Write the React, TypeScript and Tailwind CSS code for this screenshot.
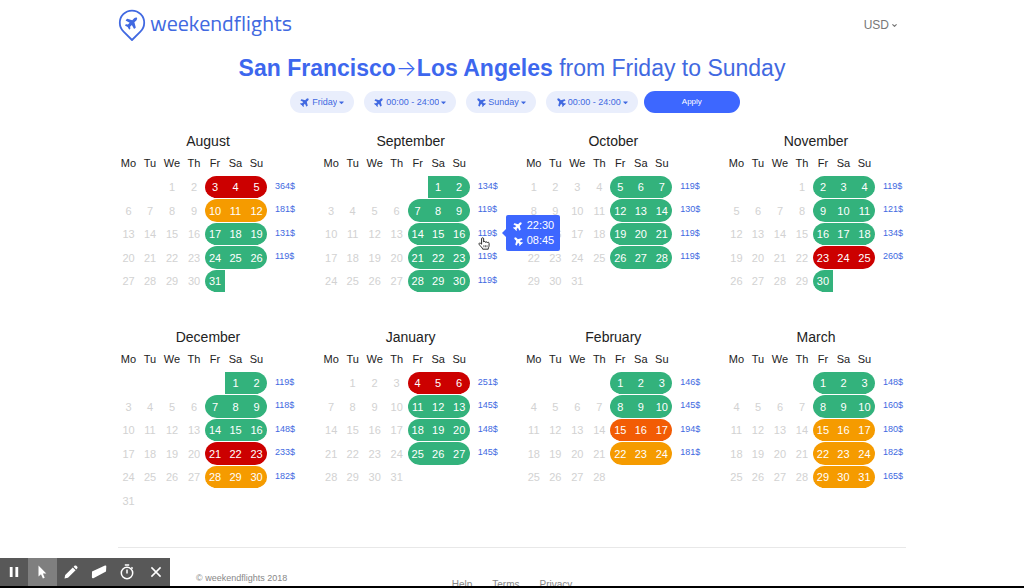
import React from "react";
import { FaPlane, FaCaretDown } from "react-icons/fa";
import { ChevronDown } from "lucide-react";

type Level = "green" | "amber" | "orange" | "red";

interface Weekend {
  price?: string;
  level: Level;
  flights?: { out: string; back: string };
}

interface Month {
  name: string;
  offset: number; // empty cells before the 1st
  days: number;
  weekends: (Weekend | null)[]; // one entry per calendar row
}

const WEEKDAYS = ["Mo", "Tu", "We", "Th", "Fr", "Sa", "Su"];

const COL_WIDTHS = ["w-[21px]", "w-[22px]", "w-[22px]", "w-[22px]", "w-5", "w-[21px]", "w-[21px]"];

const LEVEL_BG: Record<Level, string> = {
  green: "bg-[#33b27c]",
  amber: "bg-[#f59b00]",
  orange: "bg-[#f25c05]",
  red: "bg-[#cc0000]",
};

const MONTHS: Month[] = [
  {
    name: "August",
    offset: 2,
    days: 31,
    weekends: [
      { price: "364$", level: "red" },
      { price: "181$", level: "amber" },
      { price: "131$", level: "green" },
      { price: "119$", level: "green" },
      { level: "green" },
    ],
  },
  {
    name: "September",
    offset: 5,
    days: 30,
    weekends: [
      { price: "134$", level: "green" },
      { price: "119$", level: "green" },
      { price: "119$", level: "green", flights: { out: "22:30", back: "08:45" } },
      { price: "119$", level: "green" },
      { price: "119$", level: "green" },
    ],
  },
  {
    name: "October",
    offset: 0,
    days: 31,
    weekends: [
      { price: "119$", level: "green" },
      { price: "130$", level: "green" },
      { price: "119$", level: "green" },
      { price: "119$", level: "green" },
      null,
    ],
  },
  {
    name: "November",
    offset: 3,
    days: 30,
    weekends: [
      { price: "119$", level: "green" },
      { price: "121$", level: "green" },
      { price: "134$", level: "green" },
      { price: "260$", level: "red" },
      { level: "green" },
    ],
  },
  {
    name: "December",
    offset: 5,
    days: 31,
    weekends: [
      { price: "119$", level: "green" },
      { price: "118$", level: "green" },
      { price: "148$", level: "green" },
      { price: "233$", level: "red" },
      { price: "182$", level: "amber" },
      null,
    ],
  },
  {
    name: "January",
    offset: 1,
    days: 31,
    weekends: [
      { price: "251$", level: "red" },
      { price: "145$", level: "green" },
      { price: "148$", level: "green" },
      { price: "145$", level: "green" },
      null,
    ],
  },
  {
    name: "February",
    offset: 4,
    days: 28,
    weekends: [
      { price: "146$", level: "green" },
      { price: "145$", level: "green" },
      { price: "194$", level: "orange" },
      { price: "181$", level: "amber" },
      null,
    ],
  },
  {
    name: "March",
    offset: 4,
    days: 31,
    weekends: [
      { price: "148$", level: "green" },
      { price: "160$", level: "green" },
      { price: "180$", level: "amber" },
      { price: "182$", level: "amber" },
      { price: "165$", level: "amber" },
    ],
  },
];

function PlaneOut() {
  return <FaPlane className="size-2.5 shrink-0 -rotate-45" />;
}

function PlaneBack() {
  return <FaPlane className="size-2.5 shrink-0 -scale-x-100 rotate-45" />;
}

function Logo() {
  return (
    <a href="#" className="flex items-center gap-1 text-[#4169e1]">
      <svg viewBox="0 0 28 33" className="h-[33px] w-7" fill="none">
        <path
          d="M14 31 L5.6 22.6 A12.2 12.2 0 1 1 22.4 22.6 Z"
          stroke="currentColor"
          strokeWidth="1.8"
          strokeLinejoin="round"
        />
        <g transform="translate(14 13.6) rotate(-45) scale(0.024) translate(-288 -256)">
          <path
            fill="currentColor"
            d="M480 192H365.71L260.61 8.06A16.014 16.014 0 0 0 246.71 0h-65.5c-10.63 0-18.3 10.17-15.38 20.39L214.86 192H112l-43.2-57.6c-3.02-4.03-7.77-6.4-12.8-6.4H16.01C5.6 128-2.04 137.78.49 147.88L32 256 .49 364.12C-2.04 374.22 5.6 384 16.01 384H56c5.04 0 9.78-2.37 12.8-6.4L112 320h102.86l-49.03 171.6c-2.92 10.22 4.75 20.4 15.38 20.4h65.5c5.74 0 11.04-3.08 13.89-8.06L365.71 320H480c35.35 0 96-28.65 96-64s-60.65-64-96-64z"
          />
        </g>
      </svg>
      <span className="pb-1 font-['Titillium_Web','Noto_Sans',sans-serif] text-[22px] leading-8">weekendflights</span>
    </a>
  );
}

interface FilterProps {
  label: string;
  icon: React.ReactNode;
  options: string[];
}

function Filter({ label, icon, options }: FilterProps) {
  return (
    <label className="flex h-[22px] items-center rounded-full bg-[#e9eefc] px-2.5 text-[#4169e1]">
      {icon}
      <select
        aria-label={label}
        className="field-sizing-content ml-0.5 cursor-pointer appearance-none bg-transparent text-[9px] leading-3 outline-none"
      >
        {options.map((o) => (
          <option key={o}>{o}</option>
        ))}
      </select>
      <FaCaretDown className="ml-0.5 h-[9px] w-[5px] shrink-0" />
    </label>
  );
}

function FlightTooltip({ out, back }: { out: string; back: string }) {
  return (
    <div
      role="tooltip"
      className="absolute -top-2 left-9 z-10 flex h-9 w-[54px] flex-col justify-center rounded-xs bg-[#3d67ff] pl-[7px] text-[11px] leading-[15px] text-white"
    >
      <span className="absolute top-1/2 -left-1 -translate-y-1/2 border-y-4 border-r-4 border-y-transparent border-r-[#3d67ff]" />
      <span className="flex items-center gap-1">
        <PlaneOut />
        {out}
      </span>
      <span className="flex items-center gap-1">
        <PlaneBack />
        {back}
      </span>
    </div>
  );
}

function HandCursor() {
  return (
    <svg viewBox="0 0 17 19" className="absolute top-3.5 left-2 z-10 h-[13px] w-3">
      <path
        d="M5 10.5 V2.6 a1.5 1.5 0 0 1 3 0 V7.4 a1.4 1.4 0 0 1 2.7 .4 a1.4 1.4 0 0 1 2.6 .7 a1.4 1.4 0 0 1 2.6 1 V13 c0 1.6-1.2 2.4-1.2 4.8 H6.6 C6.4 15.6 3 13.6 1.3 10.6 C.6 9.2 2.3 8.2 3.4 9.2 Z"
        fill="#fff"
        stroke="#222"
        strokeWidth="1.4"
        strokeLinejoin="round"
      />
      <path d="M8.3 12 v3 M10.6 12 v3 M12.9 12 v3" stroke="#222" strokeWidth="1" />
    </svg>
  );
}

function dayCellStyle(day: number, month: Month, col: number, weekend: Weekend | null): string {
  if (day < 1 || day > month.days) return "";
  if (col < 4 || !weekend) return "text-[#d2d2d2]";
  const round = col === 4 ? "rounded-l-full" : col === 6 ? "rounded-r-full" : "";
  return `${LEVEL_BG[weekend.level]} ${round} bg-clip-padding text-white`;
}

function MonthTable({ month }: { month: Month }) {
  return (
    <table className="w-[180px] table-fixed border-separate border-spacing-0 text-center text-[11px]">
      <caption className="h-5 text-sm leading-5 text-[#222]">{month.name}</caption>
      <thead>
        <tr className="h-[25px]">
          {WEEKDAYS.map((d, i) => (
            <th key={d} scope="col" className={`p-0 font-normal text-[#222] ${COL_WIDTHS[i]}`}>
              {d}
            </th>
          ))}
          <td />
        </tr>
      </thead>
      <tbody>
        {month.weekends.map((weekend, week) => (
          <tr key={week} className="odd:h-[23px] even:h-6">
            {WEEKDAYS.map((d, col) => {
              const day = week * 7 + col - month.offset + 1;
              return (
                <td
                  key={d}
                  className={`border-b border-white p-0 leading-[22px] ${dayCellStyle(day, month, col, weekend)}`}
                >
                  {day > 0 && day <= month.days ? day : ""}
                </td>
              );
            })}
            <td className="relative p-0 pl-2 text-left align-top text-[9px] leading-5 text-[#4169e1]">
              {weekend?.price}
              {weekend?.flights && (
                <>
                  <HandCursor />
                  <FlightTooltip {...weekend.flights} />
                </>
              )}
            </td>
          </tr>
        ))}
      </tbody>
    </table>
  );
}

const TOOLS = [
  { key: "pause", label: "Pause" },
  { key: "pointer", label: "Pointer" },
  { key: "pen", label: "Pen" },
  { key: "eraser", label: "Eraser" },
  { key: "timer", label: "Timer" },
  { key: "close", label: "Close" },
];

function ToolIcon({ name }: { name: string }) {
  return (
    <svg viewBox="0 0 16 16" className="size-4" fill="none" stroke="currentColor">
      {name === "pause" && <path d="M5.2 3 V13 M10.8 3 V13" strokeWidth="2.8" />}
      {name === "pointer" && (
        <path d="M4.5 1.5 V12.5 L7 10.3 L8.9 14.5 L10.7 13.7 L8.9 9.6 H12.3 Z" fill="currentColor" stroke="none" />
      )}
      {name === "pen" && (
        <path
          d="M1.5 14.5 L2.2 11 L9.8 3.4 L12.6 6.2 L5 13.8 Z M10.6 2.7 L11.8 1.6 Q12.6 1.1 13.4 1.8 L14.3 2.7 Q14.9 3.5 14.3 4.3 L13.3 5.4 Z"
          fill="currentColor"
          stroke="none"
        />
      )}
      {name === "eraser" && (
        <path
          d="M1 7.6 L14 1.6 Q15.4 1.2 15.3 2.6 L15 7.6 L2.4 14.2 Q1 14.6 .9 13.2 Z"
          fill="currentColor"
          stroke="none"
        />
      )}
      {name === "timer" && (
        <>
          <circle cx="8" cy="9" r="5.7" strokeWidth="1.5" />
          <path d="M5.8 1 H10.2 M8 5.6 V9.4 M12.4 3.4 L13.6 4.6" strokeWidth="1.5" />
        </>
      )}
      {name === "close" && <path d="M3.4 3.4 L12.6 12.6 M12.6 3.4 L3.4 12.6" strokeWidth="1.5" />}
    </svg>
  );
}

function RecorderBar() {
  return (
    <div className="fixed inset-x-0 bottom-0 border-b-2 border-black">
      <div className="flex h-7 w-[170px] bg-[#585858] text-white">
        {TOOLS.map(({ key, label }) => (
          <button
            key={key}
            aria-label={label}
            className={`flex flex-1 items-center justify-center ${key === "pointer" ? "bg-[#7f7f7f]" : ""}`}
          >
            <ToolIcon name={key} />
          </button>
        ))}
      </div>
    </div>
  );
}

const HOURS = ["00:00 - 24:00", "00:00 - 12:00", "12:00 - 24:00"];

export default function App() {
  return (
    <div className="h-screen overflow-hidden bg-white font-['Liberation_Sans',Arial,sans-serif] text-[#222]">
      <div className="mx-auto max-w-[788px]">
        <header className="flex h-[50px] items-center justify-between">
          <Logo />
          <label className="mr-2 flex items-center gap-0.5 text-[#777]">
            <select
              aria-label="Currency"
              className="field-sizing-content cursor-pointer appearance-none bg-transparent text-xs outline-none"
            >
              <option>USD</option>
              <option>EUR</option>
            </select>
            <ChevronDown className="size-[7px]" strokeWidth={4} />
          </label>
        </header>

        <h1 className="h-[41px] text-center text-[23px] leading-9 text-[#4169e1]">
          <strong className="font-bold text-[#3d67ee]">
            San Francisco<span className="font-['Inter'] text-[22px] font-light">→</span>Los Angeles
          </strong>{" "}
          from Friday to Sunday
        </h1>

        <form className="flex items-center justify-center gap-2.5 pl-1.5" onSubmit={(e) => e.preventDefault()}>
          <Filter label="Departure day" icon={<PlaneOut />} options={["Friday", "Thursday", "Saturday"]} />
          <Filter label="Departure time" icon={<PlaneOut />} options={HOURS} />
          <Filter label="Return day" icon={<PlaneBack />} options={["Sunday", "Monday", "Tuesday"]} />
          <Filter label="Return time" icon={<PlaneBack />} options={HOURS} />
          <button type="submit" className="-ml-1 h-[22px] w-24 rounded-full bg-[#3d67ff] text-[8px] text-white">
            Apply
          </button>
        </form>

        <main className="mt-[18px] flex flex-wrap items-start justify-between gap-y-[34px]">
          {MONTHS.map((m) => (
            <MonthTable key={m.name} month={m} />
          ))}
        </main>

        <footer className="mt-[34px] grid grid-cols-3 border-t border-[#e8e8e8] pt-6 text-[9px] leading-3 text-[#888]">
          <p className="pl-[78px]">© weekendflights 2018</p>
          <nav className="flex justify-center gap-5 pt-[7px] text-[10px]">
            <a href="#">Help</a>
            <a href="#">Terms</a>
            <a href="#">Privacy</a>
          </nav>
        </footer>
      </div>
      <RecorderBar />
    </div>
  );
}
